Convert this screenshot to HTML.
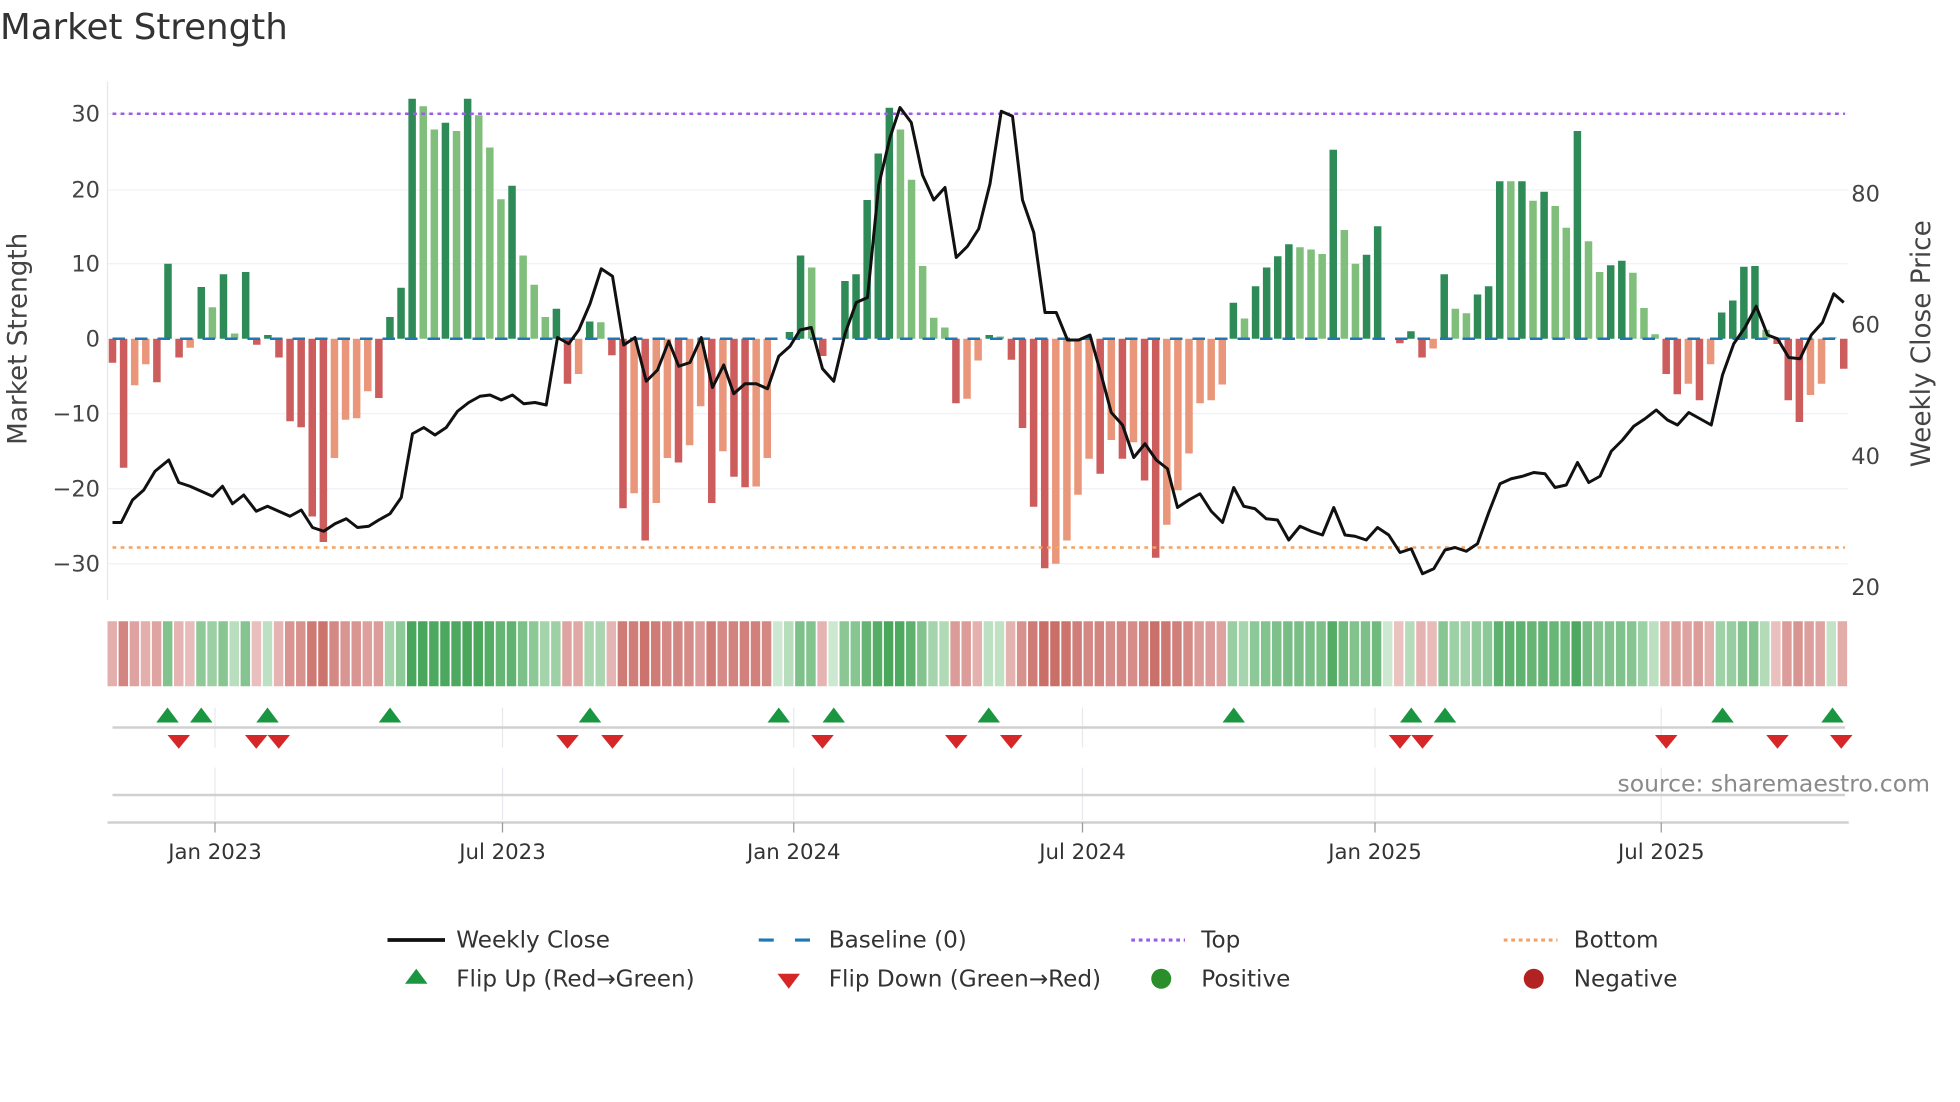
<!DOCTYPE html>
<html><head><meta charset="utf-8"><style>
html,body{margin:0;padding:0;background:#fff;}
svg{display:block;font-family:"DejaVu Sans","Liberation Sans",sans-serif;}
</style></head><body>
<svg id="s" width="1960" height="1102" viewBox="0 0 1568 881.6" xmlns="http://www.w3.org/2000/svg">
<text x="0" y="31" font-size="28.5" fill="#333">Market Strength</text>
<g id="grid" stroke="#edf0f4" stroke-width="1"></g>
<line x1="86" y1="65" x2="86" y2="480" stroke="#e8e8e8" stroke-width="1"/>
<g id="bars"></g>
<g id="base"></g>
<line x1="90" y1="91" x2="1476" y2="91" stroke="#9b5de5" stroke-width="2" stroke-dasharray="3,3.5"/>
<line x1="90" y1="438" x2="1476" y2="438" stroke="#f4a261" stroke-width="2" stroke-dasharray="3,3.5"/>
<polyline id="price" fill="none" stroke="#111" stroke-width="2.4" stroke-linejoin="round"/>
<g font-size="18" fill="#444" text-anchor="end">
<text x="80" y="97">30</text><text x="80" y="158">20</text><text x="80" y="217">10</text><text x="80" y="277">0</text>
<text x="80" y="337">−10</text><text x="80" y="397">−20</text><text x="80" y="457">−30</text></g>
<g font-size="18" fill="#444">
<text x="1481" y="161">80</text><text x="1481" y="266">60</text><text x="1481" y="371">40</text><text x="1481" y="476">20</text></g>
<text transform="translate(21,271) rotate(-90)" font-size="21" fill="#444" text-anchor="middle">Market Strength</text>
<text transform="translate(1544,275) rotate(-90)" font-size="21" fill="#444" text-anchor="middle">Weekly Close Price</text>
<g id="strip"></g>
<g id="vgrid" stroke="#e6eaee" stroke-width="1"></g>
<line x1="90" y1="582" x2="1476" y2="582" stroke="#d0d0d0" stroke-width="2"/>
<line x1="90" y1="636" x2="1476" y2="636" stroke="#d0d0d0" stroke-width="2"/>
<line x1="86" y1="658" x2="1479" y2="658" stroke="#d0d0d0" stroke-width="2"/>
<g id="tri"></g>
<g stroke="#999" stroke-width="1">
<line x1="172" y1="658" x2="172" y2="666"/><line x1="402" y1="658" x2="402" y2="666"/><line x1="635" y1="658" x2="635" y2="666"/>
<line x1="866" y1="658" x2="866" y2="666"/><line x1="1100" y1="658" x2="1100" y2="666"/><line x1="1329" y1="658" x2="1329" y2="666"/></g>
<g font-size="17" fill="#333" text-anchor="middle">
<text x="172" y="687">Jan 2023</text><text x="402" y="687">Jul 2023</text><text x="635" y="687">Jan 2024</text>
<text x="866" y="687">Jul 2024</text><text x="1100" y="687">Jan 2025</text><text x="1329" y="687">Jul 2025</text></g>
<text x="1544" y="633" font-size="18.8" fill="#8a8a8a" text-anchor="end">source: sharemaestro.com</text>
<g font-size="18.5" fill="#333">
<line x1="310" y1="752" x2="356" y2="752" stroke="#111" stroke-width="3"/><text x="365" y="758">Weekly Close</text>
<line x1="607" y1="752" x2="652" y2="752" stroke="#1f77b4" stroke-width="2.5" stroke-dasharray="12,17"/><text x="663" y="758">Baseline (0)</text>
<line x1="905" y1="752" x2="948" y2="752" stroke="#9b5de5" stroke-width="2.5" stroke-dasharray="3,3"/><text x="961" y="758">Top</text>
<line x1="1203" y1="752" x2="1246" y2="752" stroke="#f4a261" stroke-width="2.5" stroke-dasharray="3,3"/><text x="1259" y="758">Bottom</text>
<polygon points="333,775 342,787 324,787" fill="#1a9641"/><text x="365" y="789">Flip Up (Red→Green)</text>
<polygon points="622,779 640,779 631,791" fill="#d62728"/><text x="663" y="789">Flip Down (Green→Red)</text>
<circle cx="929" cy="783" r="8" fill="#2a8f2a"/><text x="961" y="789">Positive</text>
<circle cx="1227" cy="783" r="8" fill="#b22222"/><text x="1259" y="789">Negative</text>
</g>
</svg>
<script>
(function(){
var NS="http://www.w3.org/2000/svg";
function el(p,t,a){var e=document.createElementNS(NS,t);for(var k in a)e.setAttribute(k,a[k]);p.appendChild(e);return e;}
var d=[[-3.2,3],[-17.2,3],[-6.2,4],[-3.4,4],[-5.8,3],[10,1],[-2.5,3],[-1.2,4],[6.9,1],[4.2,2],[8.6,1],[0.7,2],[8.9,1],[-0.8,3],[0.5,1],[-2.5,3],[-11,3],[-11.8,3],[-23.7,3],[-27.1,3],[-15.9,4],[-10.8,4],[-10.6,4],[-7,4],[-7.9,3],[2.9,1],[6.8,1],[32,1],[31,2],[27.9,2],[28.8,1],[27.7,2],[32,1],[29.8,2],[25.5,2],[18.6,2],[20.4,1],[11.1,2],[7.2,2],[2.9,2],[4,1],[-6,3],[-4.7,4],[2.3,1],[2.2,2],[-2.2,3],[-22.6,3],[-20.6,4],[-26.9,3],[-21.9,4],[-15.9,4],[-16.5,3],[-14.2,4],[-9,4],[-21.9,3],[-15,4],[-18.4,3],[-19.8,3],[-19.7,4],[-15.9,4],[0,2],[0.9,1],[11.1,1],[9.5,2],[-2.3,3],[0,2],[7.7,1],[8.6,1],[18.5,1],[24.7,1],[30.8,1],[27.9,2],[21.2,2],[9.7,2],[2.8,2],[1.5,2],[-8.6,3],[-8,4],[-2.9,4],
[0.5,1],[0.3,2],[-2.8,3],[-11.9,3],[-22.4,3],[-30.6,3],[-30,4],[-26.9,4],[-20.8,4],[-16,4],[-18,3],[-13.5,4],[-16,3],[-13.8,4],[-18.9,3],[-29.2,3],[-24.8,4],[-20.2,4],[-15.3,4],[-8.6,4],[-8.2,4],[-6.1,4],[4.8,1],[2.7,2],[7,1],[9.5,1],[11,1],[12.6,1],[12.2,2],[11.9,2],[11.3,2],[25.2,1],[14.5,2],[10,2],[11.2,1],[15,1],[0,2],[-0.6,3],[1,1],[-2.5,3],[-1.3,4],[8.6,1],[4,2],[3.4,2],[5.9,1],[7,1],[21,1],[21,2],[21,1],[18.4,2],[19.6,1],[17.7,2],[14.8,2],[27.7,1],[13,2],[8.9,2],[9.8,1],[10.4,1],[8.8,2],[4.1,2],[0.6,2],[-4.7,3],[-7.4,3],[-6,4],[-8.2,3],[-3.4,4],[3.5,1],[5.1,1],[9.6,1],[9.7,1],[1.2,2],[-0.7,3],[-8.2,3],[-11.1,3],[-7.5,4],[-6,4],[0.2,2],[-4,3]];
var n=d.length,x0=90,x1=1475,p=(x1-x0)/(n-1);
var col={1:"#2e8b57",2:"#7fbf7b",3:"#cd5c5c",4:"#e9967a"};
var g=document.getElementById("grid");
[91,152,211,331,391,451].forEach(function(y){el(g,"line",{x1:86,x2:1478,y1:y,y2:y});});
var b=document.getElementById("bars");
d.forEach(function(v,i){var x=x0+i*p,y0=271,y=271-v[0]*6;if(v[0]==0)return;
el(b,"rect",{x:(x-3).toFixed(2),y:Math.min(y,y0).toFixed(2),width:6,height:Math.abs(y-y0).toFixed(2),fill:col[v[1]]});});
el(document.getElementById("base"),"line",{x1:90,x2:1476,y1:271,y2:271,stroke:"#1f77b4","stroke-width":2,"stroke-dasharray":"10,8"});
function mix(a,c,t){var r=[];for(var k=0;k<3;k++)r.push(Math.round(a[k]+(c[k]-a[k])*t));return "rgb("+r.join(",")+")";}
var s=document.getElementById("strip");
d.forEach(function(v,i){var x=86+i*((1479-86)/n),w=(1479-86)/n-1.3,t=Math.min(1,Math.abs(v[0])/30);t=0.12+0.8*Math.sqrt(t);
var c=v[0]>=0?mix([225,242,225],[60,160,80],t):mix([245,222,222],[198,100,94],t);
el(s,"rect",{x:x.toFixed(2),y:497,width:w.toFixed(2),height:52,fill:c});});
var vg=document.getElementById("vgrid");
[172,402,635,866,1100,1329].forEach(function(x){el(vg,"line",{x1:x,x2:x,y1:566,y2:598});el(vg,"line",{x1:x,x2:x,y1:614,y2:656});});
var tr=document.getElementById("tri");
[134,161,214,312,472,623,667,791,987,1129,1156,1378,1466].forEach(function(x){el(tr,"polygon",{points:(x)+",566 "+(x+9)+",578 "+(x-9)+",578",fill:"#1a9641"});});
[143,205,223,454,490,658,765,809,1120,1138,1333,1422,1473].forEach(function(x){el(tr,"polygon",{points:(x-9)+",588 "+(x+9)+",588 "+x+",599",fill:"#d62728"});});
var pts=[[90,418],[97,418],[106,400],[115,392],[124,377],[135,368],[143,386],[152,389],[161,393],[170,397],[178,389],[186,403],[195,396],[205,409],[214,405],[223,409],[232,413],[241,408],[250,422],[259,425],[268,419],[277,415],[286,422],[295,421],[303,416],[312,411],[321,398],[330,347],[339,342],[348,348],[357,342],[366,329],[375,322],[384,317],[392,316],[401,320],[410,316],[419,323],[428,322],[437,324],[446,270],[455,275],[463,264],[472,243],[481,215],[490,221],[499,276],[508,270],[517,305],[526,296],[535,273],[543,293],[552,290],[561,270],[570,310],[579,292],[587,315],[596,307],[605,307],[614,311],[623,285],[632,277],[640,264],[649,262],[658,295],[667,305],[676,267],[685,242],[694,238],[703,148],[712,110],[720,86],[729,98],[738,140],[747,160],[756,150],[765,206],[774,197],[783,183],[792,147],[801,89],[810,93],[818,160],[827,186],[836,250],[845,250],[854,272],[863,272],[872,268],[881,300],[889,330],[898,340],[907,366],[916,355],[925,368],[934,375],[942,406],[951,400],[960,395],[969,409],[978,418],[987,390],[995,405],[1004,407],[1013,415],[1022,416],[1031,432],[1040,421],[1049,425],[1058,428],[1067,406],[1076,428],[1084,429],[1093,432],[1102,422],[1111,428],[1120,442],[1129,439],[1138,459],[1147,455],[1156,440],[1164,438],[1173,441],[1182,435],[1191,410],[1200,387],[1209,383],[1218,381],[1227,378],[1236,379],[1244,390],[1253,388],[1262,370],[1271,386],[1280,381],[1289,361],[1298,352],[1307,341],[1316,335],[1325,328],[1334,336],[1342,340],[1351,330],[1360,335],[1369,340],[1378,300],[1387,275],[1396,262],[1405,245],[1414,268],[1422,271],[1431,286],[1440,287],[1449,268],[1458,258],[1467,235],[1475,242]];
document.getElementById("price").setAttribute("points",pts.map(function(q){return q.join(",");}).join(" "));
})();
</script>
</body></html>
